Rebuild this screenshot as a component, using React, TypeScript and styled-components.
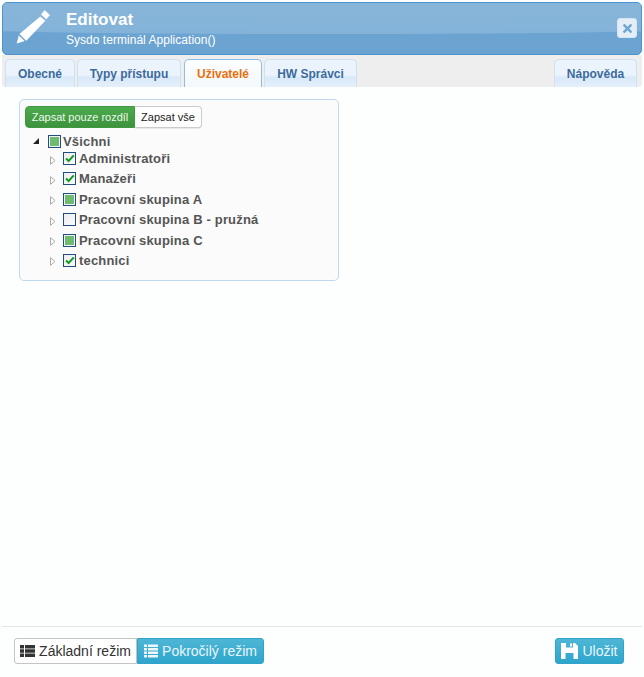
import { createGlobalStyle, styled } from 'styled-components';
import { FaTimes } from 'react-icons/fa';

const GlobalStyle = createGlobalStyle`
	html, body {
		margin: 0;
		padding: 0;
		background: #fff;
		font-family: 'Liberation Sans', Arial, sans-serif;
	}
`;

const tabs = [
	{ label: 'Obecné', width: 70 },
	{ label: 'Typy přístupu', width: 104 },
	{ label: 'Uživatelé', width: 78, active: true },
	{ label: 'HW Správci', width: 93 },
];

const groups = [
	{ label: 'Administratoři', state: 'checked' },
	{ label: 'Manažeři', state: 'checked' },
	{ label: 'Pracovní skupina A', state: 'partial' },
	{ label: 'Pracovní skupina B - pružná', state: 'empty' },
	{ label: 'Pracovní skupina C', state: 'partial' },
	{ label: 'technici', state: 'checked' },
];

const PencilIcon = () => (
	<PencilSvg width='35' height='35' viewBox='0 0 35 35' fill='#fff'>
		<path d='M28.7 0.4 L33.6 5 L30.3 9 L25.3 4.4 Z' strokeLinejoin='round' stroke='#fff' strokeWidth='0.6' />
		<path d='M24.3 6.4 L29.3 10.7 L10.3 30.8 L3.4 24 Z' />
		<path d='M0.7 33.5 L2.7 25.6 L8.7 31 Z' />
	</PencilSvg>
);

const BasicIcon = () => (
	<svg width='15' height='12' viewBox='0 0 15 12' fill='#333'>
		<path d='M0 0h4v3.4H0zM5 0h10v3.4H5zM0 4.3h4v3.4H0zM5 4.3h10v3.4H5zM0 8.6h4V12H0zM5 8.6h10V12H5z' />
	</svg>
);

const AdvancedIcon = () => (
	<svg width='14' height='14' viewBox='0 0 14 14' fill='#eef8fc'>
		<path d='M0 0.5h3v2.4H0zM4 0.5h10v2.4H4zM0 4h3v2.4H0zM4 4h10v2.4H4zM0 7.5h3v2.4H0zM4 7.5h10v2.4H4zM0 11h3v2.4H0zM4 11h10v2.4H4z' />
	</svg>
);

const SaveIcon = () => (
	<svg width='17' height='16' viewBox='0 0 17 16' fill='#fff'>
		<path fillRule='evenodd' d='M0 0h5v4.5h7V0h2l3 3v13H0z M4.5 10v6h8v-6z' />
		<path d='M9 0.5h2v3H9z' />
	</svg>
);

const RootArrow = () => (
	<ArrowSvg width='6' height='6' viewBox='0 0 6 6' $right={9}>
		<path d='M6 0 V6 H0 Z' fill='#222' />
	</ArrowSvg>
);

const Arrow = () => (
	<ArrowSvg width='6' height='9' viewBox='0 0 6 9' $right={7} $top={3}>
		<path d='M0.5 0.7 L5 4.5 L0.5 8.3 Z' fill='#fff' stroke='#aaaaaa' />
	</ArrowSvg>
);

const Check = ({ state }: { state: string }) => (
	<CheckBox>
		{state === 'partial' && <PartialFill />}
		{state === 'checked' && (
			<svg width='10' height='9' viewBox='0 0 10 9'>
				<path d='M1 4.5 L3.6 7 L8.8 1.4' fill='none' stroke='#129c1e' strokeWidth='2' />
			</svg>
		)}
	</CheckBox>
);

const App = () => {
	return (
		<Page>
			<GlobalStyle />
			<Header>
				<HeaderGloss />
				<PencilIcon />
				<HeaderText>
					<Title>Editovat</Title>
					<Subtitle>Sysdo terminál Application()</Subtitle>
				</HeaderText>
				<CloseButton>
					<FaTimes size={13} />
				</CloseButton>
			</Header>
			<TabBar>
				{tabs.map((tab) => (
					<Tab key={tab.label} $active={tab.active} $width={tab.width}>
						{tab.label}
					</Tab>
				))}
				<Spacer />
				<Tab $width={83}>Nápověda</Tab>
			</TabBar>
			<Content>
				<Panel>
					<ButtonGroup>
						<GreenButton>Zapsat pouze rozdíl</GreenButton>
						<WhiteButton>Zapsat vše</WhiteButton>
					</ButtonGroup>
					<RootRow>
						<RootArrow />
						<Check state='partial' />
						<TreeLabel>Všichni</TreeLabel>
					</RootRow>
					<TreeList>
						{groups.map((group) => (
							<TreeRow key={group.label}>
								<Arrow />
								<Check state={group.state} />
								<ChildLabel>{group.label}</ChildLabel>
							</TreeRow>
						))}
					</TreeList>
				</Panel>
			</Content>
			<Footer>
				<ModeGroup>
					<ModeButton>
						<BasicIcon />
						Základní režim
					</ModeButton>
					<ModeButton $active>
						<AdvancedIcon />
						Pokročilý režim
					</ModeButton>
				</ModeGroup>
				<SaveButton>
					<SaveIcon />
					Uložit
				</SaveButton>
			</Footer>
		</Page>
	);
};

export default App;

const Page = styled.div`
	width: 644px;
	height: 677px;
	padding: 2px 2px 0;
	box-sizing: border-box;
	display: flex;
	flex-direction: column;
	background: #fdfefe;
`;

const Header = styled.div`
	position: relative;
	height: 53px;
	box-sizing: border-box;
	border: 1px solid #4a94d2;
	border-radius: 5px;
	background: #6ca4d1;
	display: flex;
	align-items: flex-start;
	padding: 7px 9px 0 13px;
	color: #fff;
	overflow: hidden;
`;

const HeaderGloss = styled.div`
	position: absolute;
	left: -10%;
	right: -10%;
	top: -60px;
	height: 91px;
	border-radius: 0 0 50% 50% / 0 0 6px 6px;
	background: linear-gradient(#8fbadb, #84b3d9);
`;

const PencilSvg = styled.svg`
	position: relative;
	flex-shrink: 0;
	margin-right: 15px;
`;

const HeaderText = styled.div`
	position: relative;
	display: flex;
	flex-direction: column;
`;

const Title = styled.div`
	font-size: 17px;
	font-weight: 700;
	line-height: 20px;
`;

const Subtitle = styled.div`
	font-size: 12px;
	line-height: 14px;
	margin-top: 3px;
	letter-spacing: 0.03px;
`;

const CloseButton = styled.div`
	position: absolute;
	right: 4px;
	top: 15px;
	width: 20px;
	height: 20px;
	box-sizing: border-box;
	border: 1px solid #d5e5f2;
	border-radius: 3px;
	background: #e3eef7;
	color: #6fa6d3;
	display: flex;
	align-items: center;
	justify-content: center;
`;

const TabBar = styled.div`
	height: 32px;
	box-sizing: border-box;
	background: #eeeeee;
	border-radius: 0 0 4px 4px;
	display: flex;
	align-items: flex-end;
	gap: 2px;
	padding: 0 5px 0 3px;
`;

const Spacer = styled.div`
	flex: 1;
`;

const Tab = styled.div<{ $active?: boolean; $width: number }>`
	width: ${({ $width }) => $width}px;
	height: 28px;
	box-sizing: border-box;
	margin-left: ${({ $active }) => ($active ? '1px' : '0')};
	border: 1px solid ${({ $active }) => ($active ? '#8dbfe6' : '#cfe0ef')};
	border-bottom: none;
	border-radius: 5px 5px 0 0;
	background: ${({ $active }) =>
		$active ? 'linear-gradient(#fdfeff, #f3f8fc)' : 'linear-gradient(#ebf4fd 55%, #d9e9f8 65%, #e4f0fb)'};
	color: ${({ $active }) => ($active ? '#e8700c' : '#3c6a9c')};
	font-size: 12px;
	font-weight: 700;
	display: flex;
	align-items: center;
	justify-content: center;
`;

const Content = styled.div`
	flex: 1;
	padding: 12px 17px;
`;

const Panel = styled.div`
	width: 320px;
	height: 182px;
	box-sizing: border-box;
	background: #fbfbfb;
	border: 1px solid #c0d9ee;
	border-radius: 5px;
	padding: 6px 5px;
`;

const ButtonGroup = styled.div`
	display: flex;
	height: 22px;
`;

const GreenButton = styled.div`
	width: 110px;
	box-sizing: border-box;
	background: linear-gradient(#4dab4d, #3c933c);
	border: 1px solid #3f9a3f;
	border-radius: 4px 0 0 4px;
	color: #eef8ee;
	font-size: 11px;
	display: flex;
	align-items: center;
	justify-content: center;
`;

const WhiteButton = styled.div`
	width: 67px;
	box-sizing: border-box;
	background: #fff;
	border: 1px solid #cccccc;
	border-left: none;
	border-radius: 0 4px 4px 0;
	box-shadow: 0 1px 1px rgba(0, 0, 0, 0.08);
	color: #222;
	font-size: 11px;
	display: flex;
	align-items: center;
	justify-content: center;
`;

const RootRow = styled.div`
	display: flex;
	align-items: center;
	height: 18px;
	margin-top: 4px;
	padding-left: 8px;
`;

const TreeList = styled.div`
	display: flex;
	flex-direction: column;
	gap: 3.4px;
	padding-left: 25px;
`;

const TreeRow = styled.div`
	display: flex;
	align-items: center;
	height: 17px;
`;

const ArrowSvg = styled.svg<{ $right: number; $top?: number }>`
	flex-shrink: 0;
	margin-right: ${({ $right }) => $right}px;
	margin-top: ${({ $top }) => $top || 0}px;
`;

const CheckBox = styled.span`
	width: 13px;
	height: 13px;
	box-sizing: border-box;
	border: 1px solid #1f4f82;
	background: linear-gradient(135deg, #eeeeee, #fafafa);
	display: flex;
	align-items: center;
	justify-content: center;
	flex-shrink: 0;
`;

const PartialFill = styled.span`
	width: 9px;
	height: 9px;
	background: #70bb70;
`;

const TreeLabel = styled.span`
	font-size: 13px;
	font-weight: 700;
	color: #555555;
	margin-left: 2px;
	letter-spacing: 0.17px;
`;

const ChildLabel = styled(TreeLabel)`
	margin-left: 3px;
`;

const Footer = styled.div`
	height: 51px;
	box-sizing: border-box;
	border-top: 1px solid #e2e5e5;
	display: flex;
	align-items: flex-start;
	justify-content: space-between;
	padding: 11px 18px 0 12px;
`;

const ModeGroup = styled.div`
	display: flex;
	height: 26px;
`;

const ModeButton = styled.div<{ $active?: boolean }>`
	box-sizing: border-box;
	width: ${({ $active }) => ($active ? '127px' : '123px')};
	display: flex;
	align-items: center;
	justify-content: center;
	gap: 4px;
	font-size: 14px;
	border: 1px solid ${({ $active }) => ($active ? '#31a3c8' : '#c4c4c4')};
	border-radius: ${({ $active }) => ($active ? '0 3px 3px 0' : '3px 0 0 3px')};
	color: ${({ $active }) => ($active ? '#e8f6fb' : '#333')};
	background: ${({ $active }) => ($active ? 'linear-gradient(#4eb6d6, #2ea5cc)' : '#fff')};
`;

const SaveButton = styled.div`
	width: 69px;
	height: 26px;
	box-sizing: border-box;
	display: flex;
	align-items: center;
	justify-content: center;
	gap: 4px;
	font-size: 14px;
	color: #e8f6fb;
	border: 1px solid #31a3c8;
	border-radius: 3px;
	background: linear-gradient(#4eb6d6, #2ea5cc);
`;
